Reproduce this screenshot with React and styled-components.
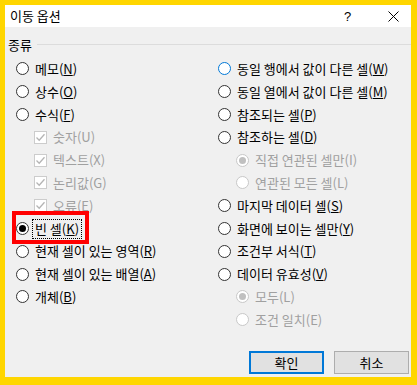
import React from 'react'
import styled, { createGlobalStyle } from 'styled-components'

const GlobalStyle = createGlobalStyle`
	html, body {
		margin: 0;
		padding: 0;
		background: #ffd600;
	}
	body {
		font-family: "Noto Sans CJK KR", "Noto Sans", sans-serif;
		font-size: 13px;
		color: #000;
	}
`

const Frame = styled.div`
	width: 417px;
	height: 385px;
	box-sizing: border-box;
	padding: 5px 6px 8px 5px;
`

const Dialog = styled.div`
	display: flex;
	flex-direction: column;
	height: 100%;
	background: #f0f0f0;
`

const TitleBar = styled.div`
	display: flex;
	align-items: center;
	height: 22px;
	background: #fff;
	padding: 0 12px 0 5px;
`

const Title = styled.div`
	flex: 1;
	font-size: 13px;
	line-height: 16px;
`

const Help = styled.div`
	width: 14px;
	margin-right: 30px;
	font-size: 13px;
	font-family: "Liberation Sans", sans-serif;
`

const Section = styled.div`
	display: flex;
	align-items: center;
	gap: 5px;
	margin: 9px 0 0 3px;
	height: 16px;
`

const Rule = styled.div`
	flex: 1;
	height: 1px;
	background: #dcdcdc;
`

const Columns = styled.div`
	display: grid;
	grid-template-columns: 202px 1fr;
	padding: 5.6px 0 0 11px;
`

const Column = styled.div`
	display: flex;
	flex-direction: column;
`

const Row = styled.div`
	position: relative;
	display: flex;
	align-items: center;
	gap: 5px;
	height: 22.8px;
	padding-left: ${p => (p.$sub ? 18 : 0)}px;
	color: ${p => (p.$disabled ? '#a0a0a0' : '#000')};
	white-space: nowrap;
`

const RadioDot = styled.span`
	position: relative;
	width: 13px;
	height: 13px;
	box-sizing: border-box;
	border-radius: 50%;
	border: 1px solid ${p => (p.$disabled ? '#c8c8c8' : p.$focus ? '#0078d7' : '#333')};
	background: #fff;
	flex: none;
	&::after {
		content: '';
		display: ${p => (p.$checked ? 'block' : 'none')};
		position: absolute;
		left: 2px;
		top: 2px;
		width: 7px;
		height: 7px;
		border-radius: 50%;
		background: ${p => (p.$disabled ? '#c0c0c0' : '#000')};
	}
`

const CheckBox = styled.span`
	display: flex;
	align-items: center;
	justify-content: center;
	width: 13px;
	height: 13px;
	box-sizing: border-box;
	border: 1px solid #cccccc;
	background: #fff;
	flex: none;
`

const Label = styled.span`
	line-height: 16px;
	outline: ${p => (p.$focus ? '1px dotted #000' : 'none')};
	outline-offset: 1px;
	padding: 0 1px;
`

const Key = styled.span`
	text-decoration: ${p => (p.$plain ? 'none' : 'underline')};
`

const Highlight = styled.div`
	position: absolute;
	left: -4px;
	top: -6px;
	width: 77px;
	height: 33px;
	box-sizing: border-box;
	border: 4px solid #ff0000;
	pointer-events: none;
`

const Footer = styled.div`
	margin-top: auto;
	display: flex;
	justify-content: flex-end;
	gap: 10px;
	padding: 0 2px 3px 0;
`

const Button = styled.button`
	width: 75px;
	height: 23px;
	box-sizing: border-box;
	background: #e1e1e1;
	border: ${p => (p.$default ? '2px solid #0078d7' : '1px solid #adadad')};
	font-family: inherit;
	font-size: 13px;
	color: #000;
	padding: 0;
`

const Check = () => (
	<svg width="11" height="11" viewBox="0 0 11 11">
		<path d="M1.5 5.5 L4.2 8.2 L9.5 2.2" fill="none" stroke="#b4b4b4" strokeWidth="1.3" />
	</svg>
)

const Close = () => (
	<svg width="11" height="11" viewBox="0 0 11 11">
		<path d="M0.5 0.5 L10.5 10.5 M10.5 0.5 L0.5 10.5" stroke="#000" strokeWidth="1" />
	</svg>
)

const Option = ({ text, k, kind = 'radio', checked, disabled, sub, focus, blue, plain, children }) => (
	<Row $sub={sub} $disabled={disabled}>
		{kind === 'radio' ? (
			<RadioDot $checked={checked} $disabled={disabled} $focus={blue} />
		) : (
			<CheckBox>
				<Check />
			</CheckBox>
		)}
		<Label $focus={focus}>
			{text}(<Key $plain={plain}>{k}</Key>)
		</Label>
		{children}
	</Row>
)

export default function App() {
	return (
		<Frame>
			<GlobalStyle />
			<Dialog>
				<TitleBar>
					<Title>이동 옵션</Title>
					<Help>?</Help>
					<Close />
				</TitleBar>
				<Section>
					<span>종류</span>
					<Rule />
				</Section>
				<Columns>
					<Column>
						<Option text="메모" k="N" />
						<Option text="상수" k="O" />
						<Option text="수식" k="F" />
						<Option kind="check" sub disabled plain text="숫자" k="U" />
						<Option kind="check" sub disabled plain text="텍스트" k="X" />
						<Option kind="check" sub disabled plain text="논리값" k="G" />
						<Option kind="check" sub disabled plain text="오류" k="E" />
						<Option text="빈 셀" k="K" checked focus>
							<Highlight />
						</Option>
						<Option text="현재 셀이 있는 영역" k="R" />
						<Option text="현재 셀이 있는 배열" k="A" />
						<Option text="개체" k="B" />
					</Column>
					<Column>
						<Option text="동일 행에서 값이 다른 셀" k="W" blue />
						<Option text="동일 열에서 값이 다른 셀" k="M" />
						<Option text="참조되는 셀" k="P" />
						<Option text="참조하는 셀" k="D" />
						<Option sub disabled checked plain text="직접 연관된 셀만" k="I" />
						<Option sub disabled plain text="연관된 모든 셀" k="L" />
						<Option text="마지막 데이터 셀" k="S" />
						<Option text="화면에 보이는 셀만" k="Y" />
						<Option text="조건부 서식" k="T" />
						<Option text="데이터 유효성" k="V" />
						<Option sub disabled checked plain text="모두" k="L" />
						<Option sub disabled plain text="조건 일치" k="E" />
					</Column>
				</Columns>
				<Footer>
					<Button $default>확인</Button>
					<Button>취소</Button>
				</Footer>
			</Dialog>
		</Frame>
	)
}
